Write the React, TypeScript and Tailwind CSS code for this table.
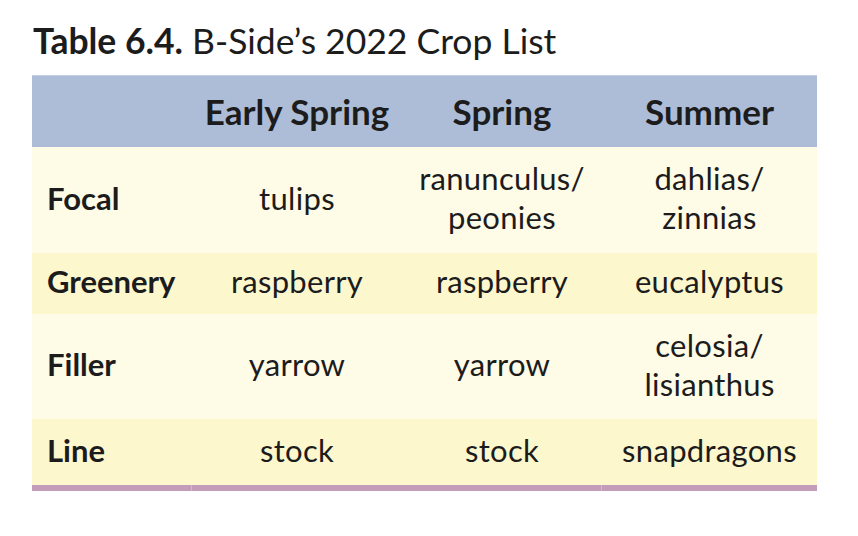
import React from "react";

const rows = [
  { label: "Focal", cells: [["tulips"], ["ranunculus/", "peonies"], ["dahlias/", "zinnias"]], h: "h-[106px]", bg: "bg-[#fefbe7]" },
  { label: "Greenery", cells: [["raspberry"], ["raspberry"], ["eucalyptus"]], h: "h-[61px]", bg: "bg-[#fdf7cd]" },
  { label: "Filler", cells: [["yarrow"], ["yarrow"], ["celosia/", "lisianthus"]], h: "h-[105px]", bg: "bg-[#fefbe7]" },
  { label: "Line", cells: [["stock"], ["stock"], ["snapdragons"]], h: "h-[66px]", bg: "bg-[#fdf7cd]" },
];

export default function App() {
  return (
    <div className="w-[858px] h-[536px] bg-white text-[#1c1c1c]" style={{ fontFamily: "Lato, 'Noto Sans', sans-serif" }}>
      <div className="pt-[21px] pl-[33px] text-[35.5px] leading-[40px] h-[75px] whitespace-nowrap">
        <span className="font-bold">Table 6.4.</span> B-Side’s 2022 Crop List
      </div>
      <div className="ml-[32px] w-[785px]">
        <div className="grid grid-cols-[160px_210px_200px_215px] h-[72px] bg-[#adbdd8] border-t border-[#c4d0e3] text-[35px] font-bold">
          <div />
          <div className="flex items-center justify-center whitespace-nowrap">Early Spring</div>
          <div className="flex items-center justify-center">Spring</div>
          <div className="flex items-center justify-center">Summer</div>
        </div>
        {rows.map((r) => (
          <div key={r.label} className={`grid grid-cols-[160px_210px_200px_215px] pb-[4px] ${r.h} ${r.bg}`}>
            <div className="flex items-center pl-[15px] text-[31px] font-bold">{r.label}</div>
            {r.cells.map((c, i) => (
              <div key={i} className="flex flex-col items-center justify-center text-[31px] leading-[39px] tracking-[0.3px] whitespace-nowrap">
                {c.map((t) => (
                  <span key={t}>{t}</span>
                ))}
              </div>
            ))}
          </div>
        ))}
        <div className="grid grid-cols-[160px_210px_200px_215px] h-[6px] bg-[#c39cb9]">
          <div className="border-r border-[#d4b7cc]" />
          <div />
          <div className="border-r border-[#d4b7cc]" />
          <div />
        </div>
      </div>
    </div>
  );
}
